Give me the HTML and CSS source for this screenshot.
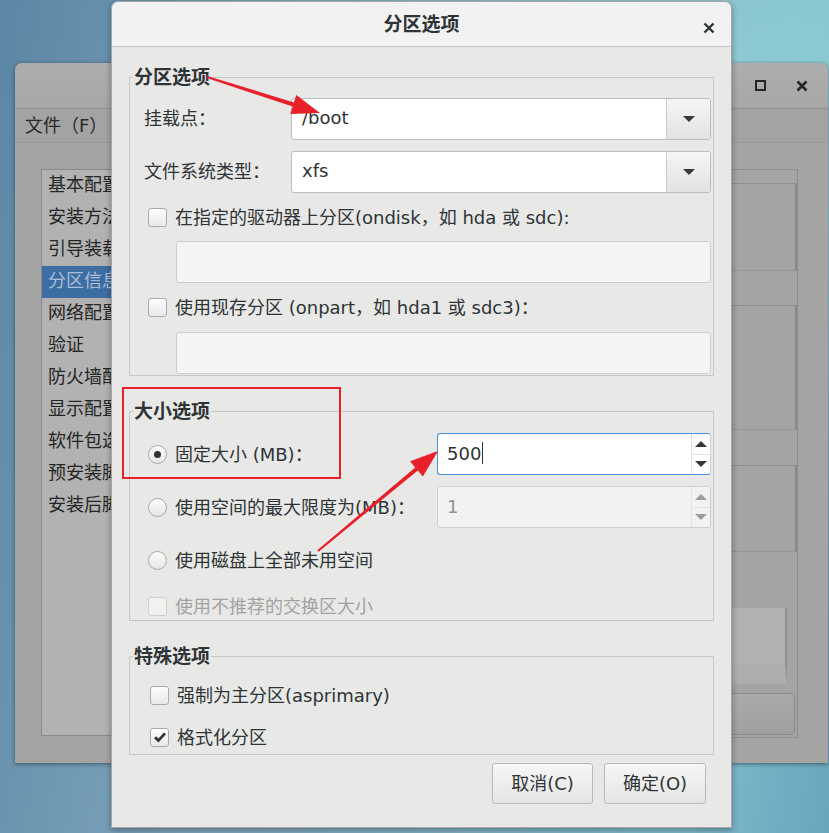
FILE: index.html
```html
<!DOCTYPE html>
<html lang="zh-CN">

<head>
    <meta charset="UTF-8">
    <title>分区选项</title>
    <link rel="stylesheet" href="styles.css">
</head>

<body>
    <div class="desktop">

        <!-- Window behind the dialog -->
        <div class="bgwin">
            <div class="bgwin-title">
                <span class="win-btn"><span class="max-box"></span></span>
                <span class="win-btn">
                    <svg width="12" height="12" viewBox="0 0 12 12"><path d="M1.5 1.5 L10.5 10.5 M10.5 1.5 L1.5 10.5" stroke="#262626" stroke-width="2.6"/></svg>
                </span>
            </div>
            <div class="bgwin-menu">文件（F）</div>
            <div class="bgwin-body">
                <ul class="side-list">
                    <li>基本配置</li>
                    <li>安装方法</li>
                    <li>引导装载程序选项</li>
                    <li class="selected">分区信息</li>
                    <li>网络配置</li>
                    <li>验证</li>
                    <li>防火墙配置</li>
                    <li>显示配置</li>
                    <li>软件包选择</li>
                    <li>预安装脚本</li>
                    <li>安装后脚本</li>
                </ul>
                <div class="side-panel">
                    <div class="panel-box box-a"></div>
                    <div class="panel-box box-b"></div>
                    <div class="panel-box box-c"></div>
                    <div class="panel-light"></div>
                    <div class="panel-button">RAID</div>
                </div>
            </div>
        </div>

        <!-- Partition options dialog -->
        <div class="dialog">
            <div class="dialog-title">
                <span class="title-text">分区选项</span>
                <span class="dialog-close">
                    <svg width="12" height="12" viewBox="0 0 12 12"><path d="M1.5 1.5 L10.5 10.5 M10.5 1.5 L1.5 10.5" stroke="#2e3436" stroke-width="2.4"/></svg>
                </span>
            </div>

            <div class="dialog-body">
                <fieldset class="group">
                    <legend>分区选项</legend>
                    <div class="group-body part-body">
                        <div class="form-row">
                            <span class="row-label">挂载点：</span>
                            <div class="combo">
                                <span class="combo-text">/boot</span>
                                <span class="combo-btn"><span class="tri-down"></span></span>
                            </div>
                        </div>
                        <div class="form-row second">
                            <span class="row-label">文件系统类型：</span>
                            <div class="combo">
                                <span class="combo-text">xfs</span>
                                <span class="combo-btn"><span class="tri-down"></span></span>
                            </div>
                        </div>
                        <div class="check-row">
                            <span class="checkbox"></span>
                            <span class="opt-text">在指定的驱动器上分区(ondisk，如 hda 或 sdc):</span>
                        </div>
                        <div class="sub-entry"></div>
                        <div class="check-row">
                            <span class="checkbox"></span>
                            <span class="opt-text">使用现存分区 (onpart，如 hda1 或 sdc3)：</span>
                        </div>
                        <div class="sub-entry last"></div>
                    </div>
                </fieldset>

                <fieldset class="group spaced">
                    <legend>大小选项</legend>
                    <div class="group-body size-body">
                        <div class="radio-row">
                            <span class="radio checked"></span>
                            <span class="opt-text">固定大小 (MB)：</span>
                            <div class="spin focus">
                                <span class="spin-text">500<span class="caret"></span></span>
                                <span class="spin-btns">
                                    <span class="spin-half"><span class="tri-up"></span></span>
                                    <span class="spin-half"><span class="tri-down"></span></span>
                                </span>
                            </div>
                        </div>
                        <div class="radio-row">
                            <span class="radio"></span>
                            <span class="opt-text">使用空间的最大限度为(MB)：</span>
                            <div class="spin disabled">
                                <span class="spin-text">1</span>
                                <span class="spin-btns">
                                    <span class="spin-half"><span class="tri-up"></span></span>
                                    <span class="spin-half"><span class="tri-down"></span></span>
                                </span>
                            </div>
                        </div>
                        <div class="radio-row">
                            <span class="radio"></span>
                            <span class="opt-text">使用磁盘上全部未用空间</span>
                        </div>
                        <div class="check-row short disabled">
                            <span class="checkbox"></span>
                            <span class="opt-text">使用不推荐的交换区大小</span>
                        </div>
                    </div>
                </fieldset>

                <fieldset class="group spaced">
                    <legend>特殊选项</legend>
                    <div class="group-body special-body">
                        <div class="check-row">
                            <span class="checkbox"></span>
                            <span class="opt-text">强制为主分区(asprimary)</span>
                        </div>
                        <div class="check-row">
                            <span class="checkbox">
                                <svg width="16" height="16" viewBox="0 0 16 16"><path d="M3 8.2 L6.4 11.6 L13 4.4" fill="none" stroke="#2e3436" stroke-width="2.8"/></svg>
                            </span>
                            <span class="opt-text">格式化分区</span>
                        </div>
                    </div>
                </fieldset>

                <div class="dialog-buttons">
                    <button class="btn cancel">取消(C)</button>
                    <button class="btn ok">确定(O)</button>
                </div>
            </div>
        </div>

        <!-- Red annotations drawn over the screenshot -->
        <div class="mark-box"></div>
        <svg class="marks" width="829" height="833" viewBox="0 0 829 833">
            <polygon fill="#e8202a" points="207.2,76.0 293.9,102.4 296.3,95.0 320,113 290.3,114.0 292.7,106.6 206.8,78.0"/>
            <polygon fill="#e8202a" points="317.3,550.3 415.2,467.4 410.1,461.2 438,451 422.9,476.6 417.8,470.4 318.7,551.7"/>
        </svg>
    </div>
</body>

</html>
```

FILE: styles.css
```css
* {
    box-sizing: border-box;
}

body {
    margin: 0;
    font-family: "DejaVu Sans", "Noto Sans CJK SC", sans-serif;
    font-size: 18px;
    color: #2e3436;
}

.desktop {
    position: relative;
    width: 829px;
    height: 833px;
    overflow: hidden;
    background:
        radial-gradient(ellipse at 90% 20%, rgba(150, 210, 215, 0.9), rgba(150, 210, 215, 0) 45%),
        linear-gradient(100deg, #5b86a5 0%, #7fa6bd 35%, #80b3c4 65%, #7cbccb 85%, #6aa5bd 100%);
}

/* ---------- background window ---------- */
.bgwin {
    position: absolute;
    left: 15px;
    top: 63px;
    width: 813px;
    height: 700px;
    background: #a4a4a4;
    border-radius: 7px 7px 0 0;
    box-shadow: 0 1px 4px rgba(0, 0, 0, 0.45);
}

.bgwin-title {
    height: 46px;
    border-radius: 7px 7px 0 0;
    background: linear-gradient(#adadad, #a7a7a7);
    border-bottom: 1px solid #929292;
    display: flex;
    justify-content: flex-end;
    align-items: center;
    padding-right: 5px;
}

.win-btn {
    width: 42px;
    display: flex;
    justify-content: center;
}

.max-box {
    width: 11px;
    height: 11px;
    border: 2.5px solid #262626;
}

.bgwin-menu {
    height: 34px;
    line-height: 34px;
    padding-left: 10px;
    background: #a3a3a3;
    border-bottom: 1px solid #999;
    color: #2a2a2a;
}

.bgwin-body {
    display: flex;
    padding: 26px 30px 0 26px;
}

.side-list {
    list-style: none;
    margin: 0;
    padding: 0;
    width: 320px;
    height: 567px;
    background: #b2b2b2;
    border: 1px solid #8a8a8a;
    color: #252525;
}

.side-list li {
    height: 32px;
    line-height: 30px;
    padding-left: 6px;
    white-space: nowrap;
}

.side-list li.selected {
    background: #3c6da3;
    color: #a9bfd8;
}

.side-panel {
    flex: 1;
    margin-left: 20px;
    height: 569px;
    border: 1px solid #8c8c8c;
    border-left: none;
    padding-top: 13px;
    display: flex;
    flex-direction: column;
}

.panel-box {
    border-right: 2px solid #8a8a8a;
    border-top: 1px solid #8f8f8f;
    border-bottom: 1px solid #959595;
}

.box-a {
    height: 88px;
}

.box-b {
    height: 125px;
    margin-top: 34px;
}

.box-c {
    height: 87px;
    margin-top: 35px;
    margin-bottom: 35px;
}

.panel-light {
    height: 76px;
    margin-top: 21px;
    margin-right: 10px;
    background: #b1b1b1;
    border-right: 2px solid #8f8f8f;
    border-bottom: 20px solid #adadad;
}

.panel-button {
    height: 42px;
    margin: 9px 2px 0 0;
    border: 1px solid #8a8a8a;
    border-radius: 5px;
    background: linear-gradient(#aaaaaa, #a0a0a0);
    color: #3a3a3a;
    line-height: 40px;
    padding-left: 14px;
    font-size: 18px;
}

/* ---------- dialog ---------- */
.dialog {
    position: absolute;
    left: 111px;
    top: 1px;
    width: 621px;
    height: 827px;
    background: #e8e8e7;
    border: 1px solid #a5a5a5;
    border-radius: 7px 7px 0 0;
    box-shadow: 0 2px 6px rgba(0, 0, 0, 0.35);
}

.dialog-title {
    position: relative;
    height: 45px;
    border-radius: 7px 7px 0 0;
    background: #f2f2f2;
    border-bottom: 1px solid #c4c4c4;
    display: flex;
    justify-content: center;
    align-items: center;
}

.title-text {
    font-weight: bold;
    font-size: 19px;
    padding-bottom: 4px;
}

.dialog-close {
    position: absolute;
    right: 16px;
    top: 15px;
}

.dialog-body {
    padding: 20px 17px 0;
}

.group {
    margin: 0;
    padding: 0;
    min-width: 0;
    border: 1px solid #c8c8c8;
}

.group.spaced {
    margin-top: 25px;
}

.group legend {
    margin-left: 3px;
    padding: 0 1px;
    font-size: 19px;
    line-height: 20px;
    font-weight: bold;
}

.group-body {
    padding: 0 2px 0 14px;
}

.part-body {
    padding-top: 11px;
    padding-bottom: 1px;
}

.size-body {
    padding-top: 12px;
}

.special-body {
    padding-top: 12px;
    padding-left: 16px;
}

.form-row {
    display: flex;
    align-items: center;
    height: 42px;
}

.form-row.second {
    margin-top: 11px;
}

.row-label {
    width: 147px;
    padding-bottom: 5px;
}

.opt-text {
    padding-bottom: 3px;
}

.combo {
    flex: 1;
    height: 42px;
    display: flex;
    background: #fff;
    border: 1px solid #bdbdbd;
    border-radius: 3px;
}

.combo-text {
    flex: 1;
    line-height: 38px;
    padding-left: 10px;
}

.combo-btn {
    width: 44px;
    border-left: 1px solid #cacaca;
    border-radius: 0 3px 3px 0;
    background: linear-gradient(#f6f6f6, #e2e2e2);
    display: flex;
    justify-content: center;
    align-items: center;
}

.tri-down,
.tri-up {
    width: 0;
    height: 0;
    border-left: 6px solid transparent;
    border-right: 6px solid transparent;
}

.tri-down {
    border-top: 6px solid #353a3b;
}

.tri-up {
    border-bottom: 6px solid #353a3b;
}

.check-row {
    display: flex;
    align-items: center;
    gap: 8px;
    height: 34px;
    margin-top: 7px;
    padding-left: 4px;
    white-space: nowrap;
}

.special-body .check-row {
    margin-top: 8px;
    padding-left: 4px;
}

.special-body .check-row:first-child {
    margin-top: 0;
}

.check-row.short {
    height: 28px;
    margin-top: 11px;
}

.check-row.disabled {
    color: #a1a3a3;
}

.checkbox {
    width: 19px;
    height: 19px;
    border: 1px solid #ababab;
    border-radius: 3px;
    background: linear-gradient(#fdfdfd, #e9e9e9);
    display: flex;
    justify-content: center;
    align-items: center;
    flex-shrink: 0;
}

.check-row.disabled .checkbox {
    border-color: #cfcfcf;
    background: #f1f1f0;
}

.sub-entry {
    height: 42px;
    margin: 7px 0 0 32px;
    background: #f4f4f2;
    border: 1px solid #cdcdcd;
    border-radius: 3px;
}

.sub-entry.last {
    margin-top: 8px;
}

.radio-row {
    display: flex;
    align-items: center;
    gap: 8px;
    height: 42px;
    padding-left: 4px;
    margin-top: 11px;
    white-space: nowrap;
}

.radio-row:first-child {
    margin-top: 0;
}

.radio {
    width: 19px;
    height: 19px;
    border: 1px solid #a8a8a8;
    border-radius: 50%;
    background: linear-gradient(#fdfdfd, #e6e6e6);
    display: flex;
    justify-content: center;
    align-items: center;
    flex-shrink: 0;
}

.radio.checked::after {
    content: "";
    width: 7px;
    height: 7px;
    border-radius: 50%;
    background: #2e3436;
}

.spin {
    margin-left: auto;
    width: 274px;
    height: 42px;
    display: flex;
    border: 1px solid #c6c6c6;
    border-radius: 3px;
    background: #fff;
}

.spin.focus {
    border-color: #4a90d9;
    border-right-color: #d0d0d0;
}

.spin.disabled {
    background: #f2f2f1;
    border-color: #cfcfcf;
    color: #8f9292;
}

.spin-text {
    flex: 1;
    padding-left: 9px;
    padding-bottom: 2px;
    display: flex;
    align-items: center;
}

.caret {
    width: 1px;
    height: 22px;
    background: #2e3436;
    margin-left: 1px;
}

.spin-btns {
    width: 19px;
    border-left: 1px solid #e2e2e2;
    display: flex;
    flex-direction: column;
}

.spin-half {
    flex: 1;
    display: flex;
    justify-content: center;
    align-items: center;
}

.spin-half + .spin-half {
    border-top: 1px solid #e2e2e2;
}

.spin.disabled .tri-up {
    border-bottom-color: #9a9d9e;
}

.spin.disabled .tri-down {
    border-top-color: #9a9d9e;
}

.dialog-buttons {
    display: flex;
    justify-content: flex-end;
    gap: 11px;
    margin-top: 8px;
    padding-right: 8px;
}

.btn {
    height: 41px;
    border: 1px solid #b9b9b9;
    border-radius: 3px;
    background: linear-gradient(#f7f7f7, #e4e4e4);
    font-family: inherit;
    font-size: 18px;
    color: #2e3436;
    padding: 0 0 4px;
}

.btn.cancel {
    width: 101px;
}

.btn.ok {
    width: 102px;
}

/* ---------- red annotations ---------- */
.mark-box {
    position: absolute;
    left: 122px;
    top: 387px;
    width: 219px;
    height: 92px;
    border: 2px solid #e8202a;
}

.marks {
    position: absolute;
    left: 0;
    top: 0;
}
```
